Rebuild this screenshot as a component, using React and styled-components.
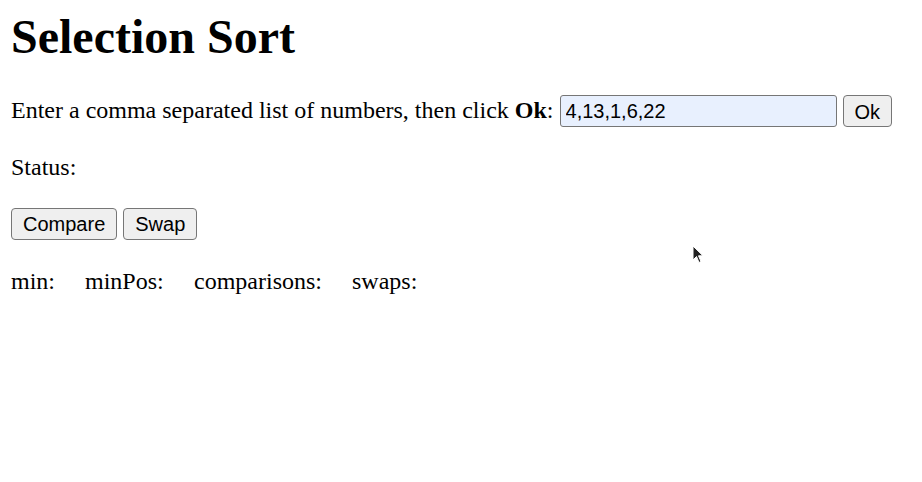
import React from "react";
import styled, { createGlobalStyle } from "styled-components";

const Global = createGlobalStyle`
  html, body { margin: 0; padding: 0; background: #fff; }
  body { font-family: "Liberation Serif", "Times New Roman", serif; color: #000; }
`;

const Page = styled.div`
  position: relative;
  padding: 9px 11px 0;
  height: 473px;
  font-size: 24px;
  line-height: 27.5px;
`;

const Title = styled.h1`
  margin: 0;
  font-size: 48px;
  line-height: 55px;
  font-weight: bold;
`;

const InputRow = styled.div`
  display: flex;
  align-items: center;
  height: 32px;
  margin-top: 31px;
  white-space: nowrap;
`;

const Prompt = styled.span`
  margin-right: 6px;
`;

const TextField = styled.input`
  box-sizing: border-box;
  width: 277px;
  height: 32px;
  margin: 0 6px 0 0;
  padding: 1px 5px 0;
  font-family: "Liberation Sans", Arial, sans-serif;
  font-size: 20px;
  color: #000;
  background: #e8f0fe;
  border: 1px solid #767676;
  border-radius: 3px;
  outline: none;
`;

const Button = styled.button`
  box-sizing: border-box;
  height: 32px;
  padding: 2px ${(p) => p.$pad || 11}px 0;
  font-family: "Liberation Sans", Arial, sans-serif;
  font-size: 20px;
  color: #000;
  background: #efefef;
  border: 1px solid #767676;
  border-radius: 4px;
`;

const Line = styled.p`
  margin: ${(p) => p.$top}px 0 0;
`;

const ButtonRow = styled.div`
  display: flex;
  gap: 6px;
  margin-top: 26px;
`;

const StatRow = styled.div`
  display: flex;
  margin-top: 28px;
`;

const Stat = styled.span`
  width: ${(p) => (p.$w ? `${p.$w}px` : "auto")};
`;

const Cursor = styled.svg`
  position: absolute;
  left: 692px;
  top: 245px;
`;

export default function App() {
  return (
    <>
      <Global />
      <Page>
        <Title>Selection Sort</Title>
        <InputRow>
          <Prompt>
            Enter a comma separated list of numbers, then click <b>Ok</b>:
          </Prompt>
          <TextField defaultValue="4,13,1,6,22" />
          <Button $pad={11}>Ok</Button>
        </InputRow>
        <Line $top={27}>Status:</Line>
        <ButtonRow>
          <Button>Compare</Button>
          <Button>Swap</Button>
        </ButtonRow>
        <StatRow>
          <Stat $w={74}>min:</Stat>
          <Stat $w={109}>minPos:</Stat>
          <Stat $w={158}>comparisons:</Stat>
          <Stat>swaps:</Stat>
        </StatRow>
        <Cursor width="12" height="20" viewBox="0 0 12 20">
          <path d="M1 1 L1 15 L4.5 11.5 L7 17.5 L9 16.5 L6.5 10.8 L11 10.8 Z" fill="#222" stroke="#fff" strokeWidth="1" />
        </Cursor>
      </Page>
    </>
  );
}
